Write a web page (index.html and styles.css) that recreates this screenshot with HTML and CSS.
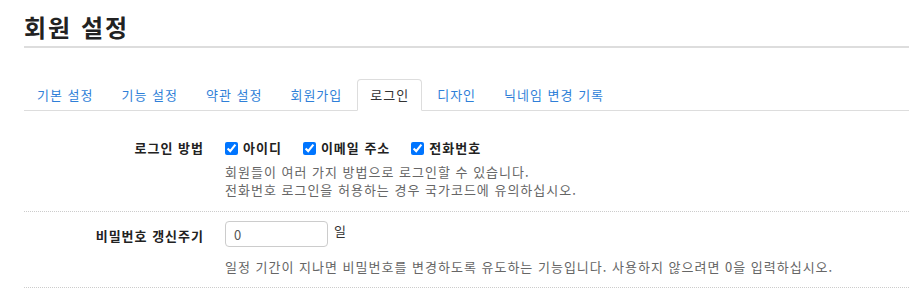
FILE: index.html
```html
<!DOCTYPE html>
<html lang="ko">
<head>
<meta charset="utf-8">
<link rel="stylesheet" href="styles.css">
</head>
<body>
<div class="page">
  <h1 class="title">회원 설정</h1>
  <ul class="tabs">
    <li class="tab"><a href="#">기본 설정</a></li>
    <li class="tab"><a href="#">기능 설정</a></li>
    <li class="tab"><a href="#">약관 설정</a></li>
    <li class="tab"><a href="#">회원가입</a></li>
    <li class="tab active"><a href="#">로그인</a></li>
    <li class="tab"><a href="#">디자인</a></li>
    <li class="tab"><a href="#">닉네임 변경 기록</a></li>
  </ul>
  <div class="form">
    <div class="row">
      <div class="label">로그인 방법</div>
      <div class="control">
        <div class="checks">
          <label class="check"><input type="checkbox" checked>아이디</label>
          <label class="check"><input type="checkbox" checked>이메일 주소</label>
          <label class="check"><input type="checkbox" checked>전화번호</label>
        </div>
        <p class="help">회원들이 여러 가지 방법으로 로그인할 수 있습니다.<br>전화번호 로그인을 허용하는 경우 국가코드에 유의하십시오.</p>
      </div>
    </div>
    <div class="row">
      <div class="label label-input">비밀번호 갱신주기</div>
      <div class="control">
        <div class="inline">
          <input class="text" type="text" value="0">
          <span class="unit">일</span>
        </div>
        <p class="help help-spaced">일정 기간이 지나면 비밀번호를 변경하도록 유도하는 기능입니다. 사용하지 않으려면 0을 입력하십시오.</p>
      </div>
    </div>
  </div>
</div>
</body>
</html>
```

FILE: styles.css
```css
html, body {
  margin: 0;
  padding: 0;
  background: #fff;
}
body {
  font-family: "Noto Sans CJK KR", "Noto Sans", sans-serif;
  font-size: 13px;
  letter-spacing: 1px;
  color: #333;
}
.page {
  padding: 0 0 0 24px;
}
.title {
  margin: 0;
  padding: 11px 0 3px;
  font-size: 24px;
  line-height: 32px;
  font-weight: 700;
  letter-spacing: 2px;
  color: #222;
  border-bottom: 2px solid #ddd;
}
.tabs {
  list-style: none;
  margin: 31px 0 0;
  padding: 0;
  display: flex;
  border-bottom: 1px solid #ddd;
}
.tab {
  margin-right: 2px;
  margin-bottom: -1px;
}
.tab a {
  display: block;
  padding: 5px 12px;
  line-height: 20px;
  border: 1px solid transparent;
  border-radius: 4px 4px 0 0;
  color: #2f7fd8;
  text-decoration: none;
}
.tab.active a {
  color: #333;
  background: #fff;
  border-color: #ddd #ddd transparent;
}
.row {
  display: flex;
  border-bottom: 1px dotted #ccc;
  padding: 27px 0 12px;
}
.row + .row {
  padding-top: 9px;
  padding-bottom: 11px;
}
.label {
  width: 180px;
  flex: none;
  text-align: right;
  font-weight: 700;
  padding-right: 21px;
  line-height: 20px;
  color: #222;
}
.label-input {
  padding-top: 5px;
}
.control {
  flex: 1;
}
.checks {
  display: flex;
  gap: 21px;
  line-height: 20px;
}
.check {
  display: flex;
  align-items: center;
  font-weight: 700;
  color: #222;
}
.check input {
  margin: 0 5px 0 0;
  width: 13px;
  height: 13px;
}
.help {
  margin: 5px 0 0;
  line-height: 18px;
  color: #666;
}
.help-spaced {
  margin-top: 11px;
}
.inline {
  display: flex;
  align-items: flex-start;
}
.text {
  width: 103px;
  height: 26px;
  box-sizing: border-box;
  border: 1px solid #ccc;
  border-radius: 4px;
  padding: 0 8px;
  font-family: inherit;
  font-size: 13px;
  color: #555;
  margin: 0;
}
.unit {
  margin-left: 6px;
  line-height: 20px;
}
```
